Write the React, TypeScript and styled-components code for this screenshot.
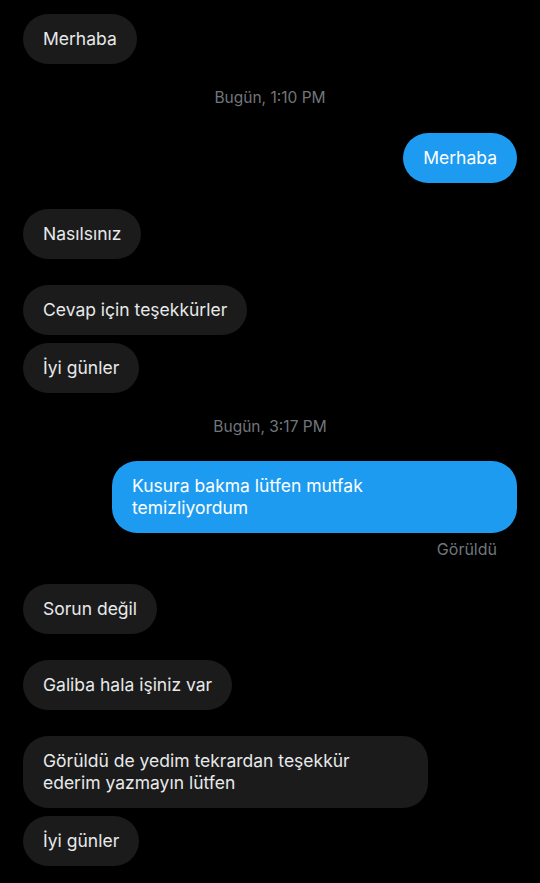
import React from 'react';
import styled, { createGlobalStyle } from 'styled-components';

const GlobalStyle = createGlobalStyle`
  html, body {
    margin: 0;
    padding: 0;
    background-color: #000000;
  }
  body {
    font-family: Inter, Roboto, "Noto Sans", "Liberation Sans", sans-serif;
    -webkit-font-smoothing: antialiased;
  }
`;

const Thread = styled.div`
  display: flex;
  flex-direction: column;
  width: 540px;
  min-height: 883px;
  box-sizing: border-box;
  padding: 14px 23px 0;
  background-color: #000000;
  overflow: hidden;
`;

const Row = styled.div<{ $mine?: boolean; $tight?: boolean; $first?: boolean }>`
  display: flex;
  justify-content: ${(p) => (p.$mine ? 'flex-end' : 'flex-start')};
  margin-top: ${(p) => (p.$first ? '0' : p.$tight ? '7.5px' : '26.3px')};
`;

// wrapped bubbles fill the max width, like the app does
const Bubble = styled.div<{ $mine?: boolean; $wrapped?: boolean }>`
  width: ${(p) => (p.$wrapped ? '405px' : 'auto')};
  max-width: 405px;
  box-sizing: border-box;
  padding: 14px 20px;
  border-radius: 25px;
  background-color: ${(p) => (p.$mine ? '#1d9bf0' : '#1b1b1b')};
  color: ${(p) => (p.$mine ? '#ffffff' : '#e7e9ea')};
  font-size: 17.5px;
  line-height: 22px;
`;

const Stamp = styled.div`
  text-align: center;
  color: #71767b;
  font-size: 15.5px;
  line-height: 20px;
  margin: 24px 0 24.5px;
`;

const Seen = styled.div`
  align-self: flex-end;
  margin: 5.5px 20px -1px 0;
  color: #71767b;
  font-size: 16px;
  line-height: 20px;
`;

type Item =
  | { kind: 'msg'; lines: string[]; mine?: boolean; tight?: boolean }
  | { kind: 'stamp'; text: string }
  | { kind: 'seen' };

const items: Item[] = [
  { kind: 'msg', lines: ['Merhaba'] },
  { kind: 'stamp', text: 'Bugün, 1:10 PM' },
  { kind: 'msg', lines: ['Merhaba'], mine: true },
  { kind: 'msg', lines: ['Nasılsınız'] },
  { kind: 'msg', lines: ['Cevap için teşekkürler'] },
  { kind: 'msg', lines: ['İyi günler'], tight: true },
  { kind: 'stamp', text: 'Bugün, 3:17 PM' },
  { kind: 'msg', lines: ['Kusura bakma lütfen mutfak', 'temizliyordum'], mine: true },
  { kind: 'seen' },
  { kind: 'msg', lines: ['Sorun değil'] },
  { kind: 'msg', lines: ['Galiba hala işiniz var'] },
  { kind: 'msg', lines: ['Görüldü de yedim tekrardan teşekkür', 'ederim yazmayın lütfen'] },
  { kind: 'msg', lines: ['İyi günler'], tight: true },
];

function App() {
  return (
    <>
      <GlobalStyle />
      <Thread>
        {items.map((item, i) => {
          if (item.kind === 'stamp') return <Stamp key={i}>{item.text}</Stamp>;
          if (item.kind === 'seen') return <Seen key={i}>Görüldü</Seen>;
          const prev = items[i - 1];
          return (
            <Row
              key={i}
              $mine={item.mine}
              $tight={item.tight}
              $first={i === 0 || (prev && prev.kind === 'stamp')}
            >
              <Bubble $mine={item.mine} $wrapped={item.lines.length > 1}>
                {item.lines.map((line, j) => (
                  <React.Fragment key={j}>
                    {j > 0 && <br />}
                    {line}
                  </React.Fragment>
                ))}
              </Bubble>
            </Row>
          );
        })}
      </Thread>
    </>
  );
}

export default App;
